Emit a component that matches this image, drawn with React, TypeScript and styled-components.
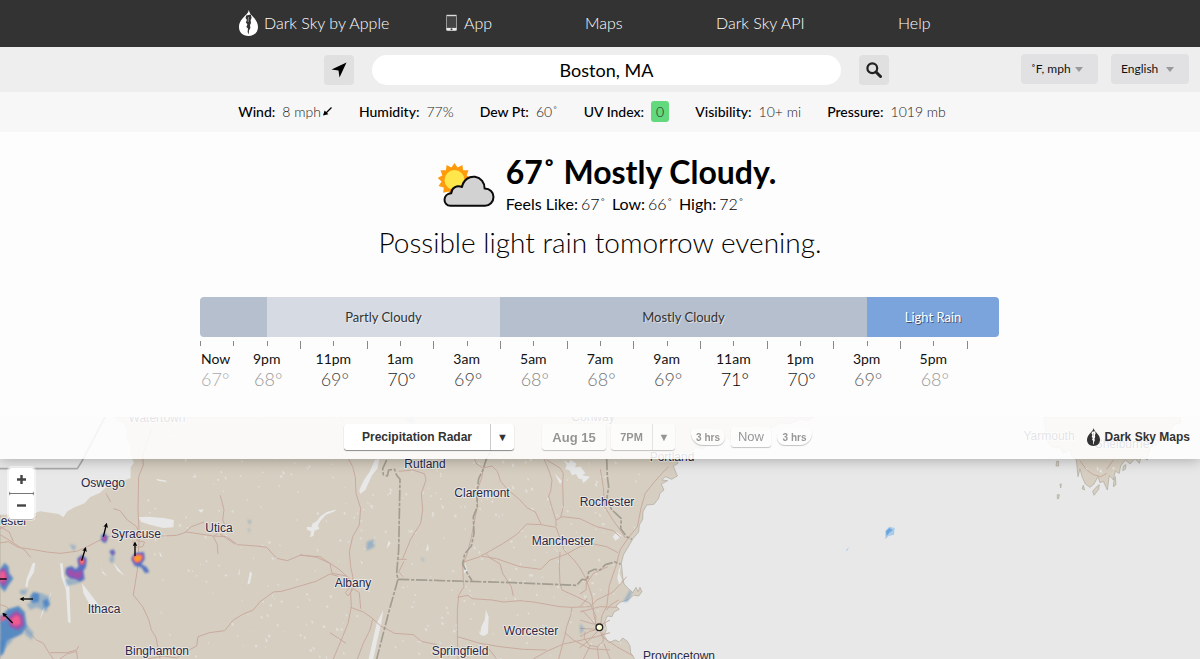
import React from "react";
import styled, { createGlobalStyle } from "styled-components";

const GlobalStyle = createGlobalStyle`
  * { box-sizing: border-box; }
  body { margin: 0; background: #fdfdfd; color: #000; font-family: Lato, sans-serif; }
  button, input, select { font-family: inherit; border: 0; margin: 0; padding: 0; }
  ul, ol, dl, dd, dt, p, h1 { margin: 0; padding: 0; list-style: none; }
`;

const Page = styled.div`
  display: flex;
  flex-direction: column;
  min-height: 100vh;
`;

const NavBar = styled.nav`
  display: grid;
  grid-template-columns: 206px 140px 131px 182px 33px;
  justify-content: center;
  align-items: center;
  height: 47px;
  padding: 0 30px 2px 0;
  background: #333;
`;

const NavLink = styled.a`
  display: flex;
  align-items: center;
  gap: 6px;
  color: #fff;
  font-size: 16px;
  font-weight: 300;
  line-height: 24px;
  text-decoration: none;
  white-space: nowrap;
`;

const SearchRow = styled.div`
  display: grid;
  grid-template-columns: 1fr auto 1fr;
  height: 45px;
  padding: 7px 11px 0 24px;
  background: #eee;
`;

const SearchForm = styled.form`
  grid-column: 2;
  display: flex;
  gap: 18px;
  padding-top: 1px;
`;

const SquareButton = styled.button`
  display: flex;
  align-items: center;
  justify-content: center;
  width: 30px;
  height: 30px;
  border-radius: 4px;
  background: #e0e0e0;
`;

const SearchInput = styled.input`
  width: 469px;
  height: 30px;
  border-radius: 15px;
  background: #fff;
  color: #000;
  font-size: 18px;
  text-align: center;
`;

const Settings = styled.div`
  display: flex;
  justify-content: flex-end;
  gap: 13px;
`;

const SelectBox = styled.label`
  position: relative;
  height: 30px;
`;

const Select = styled.select`
  appearance: none;
  width: ${(p: { $wide?: boolean }) => (p.$wide ? "78px" : "77px")};
  height: 30px;
  padding: 0 0 2px 10px;
  border-radius: 4px;
  background: #e1e1e3;
  color: #111;
  font-size: 12px;
`;

const Caret = styled.svg`
  position: absolute;
  right: 15px;
  top: 13px;
  pointer-events: none;
`;

const Stats = styled.dl`
  display: flex;
  justify-content: center;
  align-items: center;
  gap: 26px;
  height: 40px;
  padding: 0 16px 2px 0;
  background: #f7f7f7;
  font-size: 14px;
`;

const Stat = styled.div`
  display: flex;
  align-items: center;
  gap: 7px;
  white-space: nowrap;
  dt { font-weight: 500; }
  dd { display: flex; align-items: center; font-weight: 300; color: #222; }
`;

const UvBadge = styled.span`
  padding: 2px 5px;
  border-radius: 3px;
  background: #62d97c;
  line-height: 17px;
`;

const Summary = styled.section`
  display: flex;
  flex-direction: column;
  align-items: center;
  padding: 20px 0 37px;
`;

const Current = styled.div`
  display: flex;
  align-items: flex-start;
  gap: 10px;
  padding-left: 14px;
  svg { margin-top: 10px; }
`;

const Headline = styled.h1`
  font-size: 32px;
  font-weight: 700;
  line-height: 40px;
`;

const Detail = styled.dl`
  display: flex;
  gap: 6px;
  font-size: 16px;
  line-height: 24px;
  div { display: flex; gap: 3px; }
  dt { font-weight: 400; }
  dd { font-weight: 300; }
`;

const Outlook = styled.p`
  padding-top: 8px;
  font-size: 28px;
  font-weight: 300;
  line-height: 36px;
`;

const Timeline = styled.section`
  width: 100%;
  max-width: 800px;
  height: 120px;
  margin: 0 auto;
`;

const Stages = styled.div`
  display: grid;
  grid-template-columns: 67fr 233fr 367fr 132fr;
  height: 40px;
  margin-right: 1px;
  border-radius: 4px;
  overflow: hidden;
`;

const Stage = styled.div<{ $bg: string; $rain?: boolean }>`
  display: flex;
  align-items: center;
  justify-content: center;
  background: ${(p) => p.$bg};
  color: ${(p) => (p.$rain ? "#fff" : "#333")};
  text-shadow: 1px 1px 0 ${(p) => (p.$rain ? "rgba(0,0,0,.5)" : "rgba(255,255,255,.5)")};
  font-size: 13px;
`;

const Ticks = styled.div`
  display: grid;
  grid-template-columns: repeat(24, 1fr);
  height: 12px;
  padding-top: 4px;
`;

const Tick = styled.i<{ $tall: boolean }>`
  width: 1px;
  height: ${(p) => (p.$tall ? 8 : 5)}px;
  background: #888;
`;

const Hours = styled.ol`
  display: grid;
  grid-template-columns: repeat(24, 1fr);
`;

const Hour = styled.li<{ $now: boolean; $tone: string }>`
  grid-column: span ${(p) => (p.$now ? 1 : 2)};
  display: flex;
  flex-direction: column;
  align-items: ${(p) => (p.$now ? "flex-start" : "center")};
  padding-left: ${(p) => (p.$now ? 1 : 0)}px;
  color: #111;
  font-size: 14px;
  line-height: 20px;
  span {
    padding-left: ${(p) => (p.$now ? 0 : 3)}px;
    color: ${(p) => p.$tone};
    font-size: 18px;
    font-weight: 300;
  }
`;

const MapPanel = styled.section`
  position: relative;
  flex: 1;
  min-height: 242px;
  overflow: hidden;
  background: #e8e8e8;
  font-family: "Liberation Sans", Arial, sans-serif;
`;

const MapDrawing = styled.svg`
  position: absolute;
  inset: 0;
  width: 100%;
  height: 100%;
`;

const MapToolbar = styled.div`
  position: absolute;
  top: 0;
  left: 0;
  right: 0;
  display: grid;
  grid-template-columns: 1fr auto 1fr;
  align-items: center;
  height: 42px;
  padding: 0 10px 2px;
  background: rgba(255, 255, 255, 0.87);
  box-shadow: 0 2px 12px rgba(0, 0, 0, 0.25);
`;

const Controls = styled.div`
  grid-column: 2;
  display: flex;
  align-items: center;
  padding-right: 38px;
`;

const Split = styled.div<{ $faded?: boolean; $gap: number }>`
  display: flex;
  height: 26px;
  margin-right: ${(p) => p.$gap}px;
  border-radius: 3px;
  background: #fff;
  box-shadow: 0 1px 1px rgba(0, 0, 0, 0.45);
  opacity: ${(p) => (p.$faded ? 0.5 : 1)};
`;

const MapButton = styled.button<{ $w: number; $size?: number }>`
  width: ${(p) => p.$w}px;
  background: none;
  color: #333;
  font-size: ${(p) => p.$size ?? 12}px;
  font-weight: 700;
  white-space: nowrap;
  & + & { border-left: 1px solid #ccc; font-size: 11px; }
`;

const StepButton = styled.button<{ $w: number; $kind: "back" | "now" | "forward" }>`
  width: ${(p) => p.$w}px;
  height: ${(p) => (p.$kind === "now" ? 20 : 16)}px;
  padding-bottom: ${(p) => (p.$kind === "now" ? 2 : 0)}px;
  margin-right: 6px;
  border-radius: ${(p) =>
    p.$kind === "now" ? "3px" : p.$kind === "back" ? "2px 8px 8px 12px" : "8px 2px 12px 8px"};
  background: #fff;
  box-shadow: 0 1px 1px rgba(0, 0, 0, 0.45);
  color: #333;
  font-size: ${(p) => (p.$kind === "now" ? 13 : 10)}px;
  font-weight: ${(p) => (p.$kind === "now" ? 400 : 700)};
  white-space: nowrap;
  opacity: 0.5;
`;

const MapBrand = styled.a`
  display: flex;
  align-items: center;
  justify-self: end;
  gap: 5px;
  color: #333;
  font-size: 12px;
  font-weight: 700;
  text-decoration: none;
  white-space: nowrap;
`;

const ZoomControl = styled.div`
  position: absolute;
  left: 9px;
  top: 51px;
  display: flex;
  flex-direction: column;
  gap: 1px;
  border-radius: 3px;
  background: #777;
  box-shadow: 0 0 0 2px rgba(255, 255, 255, 0.5), 0 1px 0 #777;
`;

const ZoomButton = styled.button`
  width: 25px;
  height: 25px;
  border-radius: 2px;
  background: #fff;
  color: #333;
`;

function DropLogo({ fill, cut, w, h }: { fill: string; cut: string; w: number; h: number }) {
  return (
    <svg width={w} height={h} viewBox="0 0 19 26" aria-hidden="true">
      <path d="M9.8 0C10.4 2 10.8 3 11.600 4.200C12.500 5.200 13.200 5.800 14 6.800C17 10 19 13 19 17C19 22.300 15.200 26 9.500 26C3.800 26 0 22.300 0 17C0 12 3.200 9 6.200 5.600C7.800 3.900 9.200 3 9.800 0Z" fill={fill} />
      <path d="M7.200 5.400L11.800 4.600L12.600 8L11.600 10L12 13L11 15L11.400 18L10 20.500L9.700 24.600L8.600 22L9 18.600L7.400 17L8.400 14.300L6.800 12.500L7.900 10L6.600 8Z" fill={cut} />
      <path d="M9.500 7L9.200 12" stroke={fill} strokeWidth=".8" opacity=".5" />
    </svg>
  );
}

const sunPoints = Array.from({ length: 26 }, (_, i) => {
  const r = i % 2 ? 13 : 17;
  const a = (i / 26) * Math.PI * 2 - Math.PI / 2;
  return `${(16.5 + r * Math.cos(a)).toFixed(1)},${(18 + r * Math.sin(a)).toFixed(1)}`;
}).join(" ");

function WeatherIcon() {
  return (
    <svg width="58" height="46" viewBox="0 0 58 46" role="img" aria-label="Mostly cloudy">
      <polygon points={sunPoints} fill="#ff9a0c" />
      <circle cx="16.5" cy="18" r="10" fill="#ffe64a" />
      <path
        d="M12.5 43.7C4.500 43.700 4.300 31.800 13.300 31.300C13.300 26 18.500 23 24 25C25.500 17.500 31 14.200 37 14.800C43 15.800 46.800 20.500 46.600 26.600C52 26.600 55.500 30.300 55.500 35C55.500 40 51.500 43.700 47 43.700Z"
        fill="#d2d2d2" stroke="#0a0a0a" strokeWidth="2" strokeLinejoin="round"
      />
    </svg>
  );
}

const LAND =
  "M0 21H2440L2425 32L2400 27L2370 42L2340 38L2310 55L2270 62L2250 80L2220 72L2200 92L2170 80L2150 105L2130 95L2110 118L2085 112L2070 135L2045 130L2030 147L2034 160L2020 168L2032 198L2015 208L1996 200L1985 210L2003 212L1984 222L1992 240L1980 250L1976 265L1962 283L1940 285L1929 305L1928 328L1918 345L1916 366L1899 386L1885 410L1870 435L1864 460L1868 500L1872 522L1884 535L1898 548L1908 532L1914 545L1920 532L1926 545L1916 558L1900 556L1884 570L1862 576L1848 588L1858 598L1842 606L1836 620L1822 618L1814 636L1820 658L1812 676L1826 698L1846 690L1858 696L1868 684L1882 694L1890 708L1892 728L1912 760H0Z";
const NOVA =
  "M3132 21H3540L3544 38L3520 44L3512 64L3484 76L3470 104L3450 112L3442 150L3424 138L3418 160L3405 146L3390 162L3376 150L3362 168L3358 190L3346 184L3340 210L3328 196L3322 240L3310 214L3300 218L3294 200L3282 222L3270 232L3256 222L3246 200L3240 176L3234 200L3229 150L3215 138L3212 118L3190 130L3180 110L3160 115L3140 90Z";
const LAKE =
  "M0 21H345L352 32L370 42L382 62L376 82L392 108L390 130L402 158L392 172L392 205L350 218L320 230L300 248L270 262L254 280L224 292L202 304L190 322L176 312L150 308L120 304L98 312L0 314Z";

const ROADS = [
  "M458 52L440 95L428 140L430 165L416 200L414 300L418 380L412 480L400 555L428 590L446 628L454 660L468 682L480 747",
  "M-10 400L25 395L55 412L95 418L140 426L180 430L230 424L262 410L300 390L330 378L420 374L490 378L530 376L560 366L600 372L640 378L680 380L712 404L770 408L800 412L830 445L862 452L900 436L960 440L990 460L996 490L1040 498L1060 520",
  "M340 296L360 302L382 330L410 350L418 370L410 392L434 396L428 410L405 412L398 392",
  "M318 250L332 276M556 366L574 350L612 336M661 256L672 300L668 330L676 348L655 368L640 380L652 404L654 432",
  "M660 372L690 392L704 402",
  "M0 374L30 392L54 408L74 420L92 442M0 350L28 366L40 395M110 320L90 330L28 342L0 356",
  "M440 747L490 738L530 744L552 728L590 708L594 680L628 668L674 662L700 630L730 612L760 600L780 575L820 546L845 544L900 528L948 514L990 492",
  "M0 640L20 650L60 644L90 670L110 690L130 700L148 730L160 747M150 728L200 728L230 720L236 708M180 747L200 732L230 724L232 747M0 584L20 590L28 600",
  "M1046 147L1058 170L1066 202L1068 250L1082 295L1078 345L1058 380L1048 425L1052 470L1058 498L1060 520L1052 548L1054 590L1044 640L1028 680L1000 747",
  "M900 434L950 442L990 460L1020 480L1054 512M990 492L1012 498L1030 522M1060 520L1036 548L1044 558L1060 536L1078 548L1082 596",
  "M1052 592L1090 606L1116 624L1142 648L1184 670L1240 674L1264 694L1310 704L1346 740M1118 628L1110 660L1090 700L1072 747M990 668L1038 700",
  "M1212 454L1196 486L1210 500M1195 448H1220M1196 184L1240 180L1274 192L1278 210L1264 250L1268 300L1262 340L1232 388L1208 446",
  "M1424 147L1428 160L1450 175L1446 200L1434 236L1432 290L1422 340L1414 382L1402 430L1388 466L1390 510L1392 530L1376 556L1372 602L1372 680L1374 747",
  "M1450 174L1476 168L1492 184L1502 214L1524 240L1558 268L1582 294L1606 306L1624 344L1668 352L1680 384L1692 420L1722 450L1740 474L1758 506L1776 560L1782 616L1790 650",
  "M1632 147L1646 180L1656 210L1652 244L1646 258L1658 300L1668 330L1668 350",
  "M1668 330L1688 320L1740 326L1790 350L1840 362L1862 382M1640 150L1680 174L1690 190L1688 220L1690 290L1682 322",
  "M1624 344L1580 342L1552 372L1510 400L1458 430L1442 438L1490 446L1530 460L1560 470L1622 478L1650 450L1700 432L1740 410L1780 402L1820 410L1854 428",
  "M1458 430L1470 444L1500 462L1508 490L1534 530L1540 558M1392 456L1440 440",
  "M1372 562L1404 556L1416 566L1476 570L1510 576L1560 572L1600 576L1680 590L1716 592L1770 590L1790 570L1836 548L1858 526L1880 500",
  "M1716 592L1712 616L1700 650L1694 680L1676 747M1600 747L1640 724L1690 702L1720 696L1790 680L1830 668M1694 668L1720 690L1770 716L1830 720",
  "M1372 680L1440 700L1500 710L1570 718L1640 720M1466 716L1490 747",
  "M2006 170L1986 190L1958 222L1936 250L1924 290L1912 350L1886 382L1860 420L1848 468L1828 526L1820 590L1806 616L1800 655",
  "M1801 178L1810 232L1814 290L1840 332L1862 362L1876 384",
  "M1740 630L1772 640L1800 646L1830 630M1740 655L1790 658M1740 680L1770 664L1800 656M1746 600L1770 626L1792 650M1760 500L1758 540L1740 552M1762 566L1740 590M1800 656L1764 694L1738 714M1800 656L1806 680L1850 710L1900 738M1756 665L1752 684L1768 706L1792 710L1810 694L1808 668M1740 606L1800 590L1850 592",
  "M1770 708L1750 747M1792 710L1796 747M1812 700L1830 747M1680 426L1678 470L1680 520L1686 540L1730 560L1770 580L1788 620L1786 646M1856 570L1830 586L1820 600M1824 470L1780 490L1760 520",
  "M3240 152L3260 180L3280 194L3302 200L3320 190M3320 178L3340 150",
];

const BORDERS = [
  "M315 21L245 155L232 176H0",
  "M1160 150L1148 176L1150 194L1162 198L1166 180L1184 178L1190 196L1200 208L1196 420L1190 490L1194 508L1168 600L1130 747",
  "M1194 508L1400 514L1540 518L1730 526L1746 508L1762 510L1766 486L1784 478L1800 480L1816 464L1844 456L1862 462",
  "M1500 40L1480 110L1458 150L1448 182L1436 206L1430 250L1432 290L1420 320L1422 370L1414 408L1394 432L1388 462L1402 490L1416 512",
  "M1820 147L1822 200L1826 230L1820 270L1836 300L1864 326L1862 356L1880 380L1896 388",
];

const WATERS = [
  "M415 322L445 320L490 324L522 330L520 352L490 354L450 344L424 336Z",
  "M180 460L188 460L192 500L208 530L212 640L204 636L198 540L184 500Z",
  "M246 520L262 540L292 580L304 610L290 596L266 578L250 550Z",
  "M98 460L106 458L102 486L86 512L82 532L76 530L80 506Z",
  "M302 450L306 480L322 500L308 490ZM338 455L374 498L352 482ZM364 454L382 474ZM154 545L146 580L130 606L118 632L128 600ZM478 422L486 440L480 438Z",
  "M750 484L756 490L750 520L742 524ZM468 206L500 212L498 216L474 212ZM594 300L612 298L604 308ZM720 474L714 494L718 494Z",
  "M1138 147L1132 176L1116 196L1096 240L1080 252L1078 240L1092 210L1110 184L1124 150Z",
  "M920 350L934 352L938 340L950 334L960 320L980 306L1012 298L1000 306L978 314L962 332L954 346L958 356L944 362L940 378L930 382L934 364L922 360Z",
  "M1458 600L1466 620L1464 670L1452 678L1440 674L1444 650L1454 630ZM1150 600L1130 640L1106 747H1120L1132 690L1144 640Z",
  "M1690 150L1706 160L1712 150L1728 160L1726 172L1742 170L1756 190L1746 196L1752 208L1736 206L1728 192L1716 196L1708 180L1696 178L1700 164ZM1664 190L1686 214L1680 222ZM1740 194L1770 200L1750 220ZM1838 380L1850 366L1866 378L1846 392ZM1396 460L1402 482L1390 492Z",
  "M1284 400L1286 420L1278 424ZM1166 392L1172 400L1160 416ZM120 30L170 36L150 48Z",
  "M1864 462L1858 490L1866 510L1858 525L1852 505L1856 480ZM1816 650L1830 642L1842 660L1830 672L1838 690L1822 684Z",
];

// Small ponds scattered over the land, from a fixed seed.
const PONDS = (() => {
  let seed = 71;
  const next = () => (seed = (seed * 16807) % 2147483647) / 2147483647;
  return Array.from({ length: 380 }, () => {
    const x = Math.round(440 + next() * 1480);
    const y = Math.round(21 + next() * 726);
    const a = Math.round(2 + next() * 4);
    const b = Math.round(next() * 10 - 5);
    return `M${x} ${y}l${a} ${b}l3 ${a}l-${a} 3z`;
  }).join("");
})();

type Blob = { d: string; fill: string };
const RAIN: Blob[] = [
  { d: "M0 478L14 458L26 470L28 490L40 505L24 528L14 545L0 530ZM90 560L100 546L118 550L116 576L94 580ZM128 572L144 566L150 585L134 596ZM0 620L24 598L56 588L74 606L80 650L66 672L36 686L20 694L10 730L0 738Z", fill: "#4c83c3" },
  { d: "M232 446L246 434L260 446L258 470L250 484L254 508L240 516L228 508L210 506L196 492L198 474L214 468L228 478L236 468ZM304 376L316 370L324 384L316 400L304 392ZM328 424L340 418L346 428L338 440ZM394 446L404 430L432 426L434 448L424 462L440 472L448 486L436 490L424 472L404 468Z", fill: "#4568c4" },
  { d: "M0 480L14 474L26 500L14 530L0 520ZM24 620L48 602L68 616L72 646L54 660L30 650ZM236 450L246 440L256 452L250 466L240 466ZM200 482L214 476L226 488L244 478L248 500L232 508L204 496ZM308 380L318 378L318 392L310 392ZM398 444L408 434L428 432L426 450L414 460L400 456ZM332 426L340 424L340 434Z", fill: "#a84ba9" },
  { d: "M0 488L12 482L18 502L8 518L0 510ZM34 626L48 614L60 622L62 642L48 648L34 642ZM0 622L14 614L20 626L4 636ZM238 452L248 444L254 456L244 466ZM398 444L408 434L428 434L426 450L410 460ZM309 382L317 382L314 392Z", fill: "#fa5c8b" },
  { d: "M400 442L412 436L426 438L422 452L406 456ZM241 454L249 450L247 462Z", fill: "#ffa51f" },
];

const WIND = [
  [310, 380, 319, 344], [245, 452, 256, 416], [405, 438, 405, 400],
  [99, 567, 64, 567], [38, 639, 11, 612], [20, 507, -10, 507],
];

const PLACES: [string, number, number][] = [
  ["Watertown", 157, 5], ["Oswego", 103, 70], ["Rochester", 0, 108], ["Syracuse", 136, 121],
  ["Utica", 219, 115], ["Ithaca", 104, 196], ["Binghamton", 157, 238], ["Rutland", 425, 51],
  ["Claremont", 482, 80], ["Rochester", 607, 89], ["Manchester", 563, 128], ["Albany", 353, 170],
  ["Worcester", 531, 218], ["Springfield", 460, 238], ["Conway", 593, 4], ["Portland", 672, 44],
  ["Provincetown", 679, 243], ["Yarmouth", 1049, 23], ["Shelburne", 1122, 31],
];

function RadarMap() {
  return (
    <MapDrawing viewBox="0 0 1200 242" preserveAspectRatio="xMidYMid slice" role="img" aria-label="Precipitation radar map">
      <defs>
        <filter id="soft" x="-20%" y="-20%" width="140%" height="140%"><feGaussianBlur stdDeviation="3" /></filter>
        <clipPath id="land"><path d={LAND} /></clipPath>
        <marker id="tip" viewBox="0 0 10 10" refX="6" refY="5" markerWidth="14" markerHeight="14" markerUnits="userSpaceOnUse" orient="auto">
          <path d="M0 0L10 5L0 10L2 5Z" />
        </marker>
      </defs>
      <g transform="translate(0 -7) scale(.333333)" strokeLinejoin="round">
        <path d={LAND + NOVA} fill="#d6cec0" stroke="#aaa79b" strokeWidth="2" />
        <path d="M3170 154h6v14h-8zM3180 222h4l-2 12zM3172 254h6l-2 12h-4zM3288 232l10-8-2 14-14 18-4-12zM3250 226l4 14-8-4zM3370 168l8-4-2 14-8 4zM3342 210l4-10 2 24-8 6z" fill="#d6cec0" stroke="#aaa79b" strokeWidth="2" />
        <path d={LAKE} fill="#e8e8e8" />
        <g clipPath="url(#land)" fill="#e8e8e8">
          <path d={PONDS} opacity=".65" />
          {WATERS.map((d) => <path key={d} d={d} />)}
        </g>
        <path d="M3255 172l8 4-4 8zM3290 168l6 10-4 6zM3302 176l6 12-10-2zM3336 174l8-4-2 10z" fill="#e8e8e8" />
        {ROADS.map((d) => <path key={d} d={d} fill="none" stroke="#c9aa9f" strokeWidth="3" />)}
        {BORDERS.map((d, i) => (
          <path key={d} d={d} fill="none" stroke={i ? "#a29d91" : "#aaa"} strokeWidth="5" strokeDasharray={i ? "34 5 10 5" : undefined} />
        ))}
        <g filter="url(#soft)" fill="#5f94c8" opacity=".5">
          <path d="M60 540L84 538L76 556L60 552ZM80 580L90 600L110 592L140 606L150 560L120 548L96 580ZM76 640L100 668L96 690L74 672ZM0 690L40 690L20 710L0 745ZM196 506L240 510L236 520L200 528ZM328 440L344 440L340 460L330 456ZM208 402L228 408L222 424ZM742 330L754 332L750 344ZM744 358L750 356L748 370ZM1100 396L1120 388L1124 410L1100 422ZM1262 442L1272 448L1270 456ZM1216 30L1240 24L1238 40ZM1740 640L1752 655L1742 676ZM1870 576L1890 540L1896 548L1882 576Z" />
        </g>
        {RAIN.map((b) => <path key={b.fill} d={b.d} fill={b.fill} filter="url(#soft)" opacity=".9" />)}
        <path d="M2656 362L2668 350L2684 354L2682 374L2666 378L2656 388ZM2536 424L2546 412L2544 420Z" fill="#a9cbea" />
        <path d="M2658 364L2668 354L2678 360L2668 368L2660 378Z" fill="#6ba6df" />
        {WIND.map(([x1, y1, x2, y2]) => (
          <line key={x1} x1={x1} y1={y1} x2={x2} y2={y2} stroke="#000" strokeWidth="4" markerEnd="url(#tip)" />
        ))}
        <circle cx="1798" cy="652" r="10" fill="#ffffd8" stroke="#222" strokeWidth="4" />
      </g>
      <g fontSize="12" textAnchor="middle" fill="#28284a" stroke="#f2efea" strokeWidth="2" strokeOpacity=".8" paintOrder="stroke" strokeLinejoin="round">
        {PLACES.map(([name, x, y]) => <text key={name + x} x={x} y={y}>{name}</text>)}
      </g>
    </MapDrawing>
  );
}

const HOURS: [string, string, string][] = [
  ["Now", "67°", "#aaa"], ["9pm", "68°", "#999"], ["11pm", "69°", "#444"], ["1am", "70°", "#222"],
  ["3am", "69°", "#444"], ["5am", "68°", "#888"], ["7am", "68°", "#777"], ["9am", "69°", "#555"],
  ["11am", "71°", "#000"], ["1pm", "70°", "#222"], ["3pm", "69°", "#666"], ["5pm", "68°", "#999"],
];

function SelectCaret() {
  return <Caret width="8" height="5" viewBox="0 0 8 5" aria-hidden="true"><path d="M0 0H8L4 5Z" fill="#999" /></Caret>;
}

export default function App() {
  return (
    <Page>
      <GlobalStyle />
      <NavBar>
        <NavLink href="#"><DropLogo fill="#fff" cut="#333" w={19} h={26} />Dark Sky by Apple</NavLink>
        <NavLink href="#app">
          <svg width="13" height="18" viewBox="0 0 13 18" aria-hidden="true">
            <rect x="1.500" y="1.500" width="10" height="15" rx="1" fill="#444" stroke="#999" />
            <path d="M1.500 1.500H11.500" stroke="#ddd" strokeWidth="1.400" />
            <path d="M1.500 15.200H11.500" stroke="#eee" strokeWidth="2.600" />
            <circle cx="6.500" cy="15.300" r="1" fill="#444" />
          </svg>
          App
        </NavLink>
        <NavLink href="#maps">Maps</NavLink>
        <NavLink href="#api">Dark Sky API</NavLink>
        <NavLink href="#help">Help</NavLink>
      </NavBar>

      <SearchRow>
        <SearchForm onSubmit={(e) => e.preventDefault()}>
          <SquareButton type="button" aria-label="Use my location">
            <svg width="16" height="16" viewBox="0 0 16 16" aria-hidden="true"><path d="M15.500 .5L8.500 15.500L7.500 8.500L.5 7.500Z" /></svg>
          </SquareButton>
          <SearchInput aria-label="Location" defaultValue="Boston, MA" />
          <SquareButton type="submit" aria-label="Search">
            <svg width="16" height="16" viewBox="0 0 16 16" aria-hidden="true">
              <circle cx="6.300" cy="6.300" r="4.900" fill="none" stroke="#222" strokeWidth="2.200" />
              <path d="M10 10L14.500 14.500" stroke="#222" strokeWidth="3" strokeLinecap="round" />
            </svg>
          </SquareButton>
        </SearchForm>
        <Settings>
          <SelectBox><Select aria-label="Units"><option>˚F, mph</option></Select><SelectCaret /></SelectBox>
          <SelectBox><Select $wide aria-label="Language"><option>English</option></Select><SelectCaret /></SelectBox>
        </Settings>
      </SearchRow>

      <Stats>
        <Stat>
          <dt>Wind:</dt>
          <dd>8 mph
            <svg width="12" height="12" viewBox="0 0 12 12" aria-label="from the northeast"><path d="M10.500 2.500L5 8" stroke="#000" strokeWidth="1.300" /><path d="M2 10.500L3.600 5.500L7.400 9.200Z" /></svg>
          </dd>
        </Stat>
        <Stat><dt>Humidity:</dt><dd>77%</dd></Stat>
        <Stat><dt>Dew Pt:</dt><dd>60˚</dd></Stat>
        <Stat><dt>UV Index:</dt><dd><UvBadge>0</UvBadge></dd></Stat>
        <Stat><dt>Visibility:</dt><dd>10+ mi</dd></Stat>
        <Stat><dt>Pressure:</dt><dd>1019 mb</dd></Stat>
      </Stats>

      <Summary>
        <Current>
          <WeatherIcon />
          <div>
            <Headline>67˚ Mostly Cloudy.</Headline>
            <Detail>
              <div><dt>Feels Like:</dt><dd>67˚</dd></div>
              <div><dt>Low:</dt><dd>66˚</dd></div>
              <div><dt>High:</dt><dd>72˚</dd></div>
            </Detail>
          </div>
        </Current>
        <Outlook>Possible light rain tomorrow evening.</Outlook>
      </Summary>

      <Timeline>
        <Stages>
          <Stage $bg="#b6bfce" />
          <Stage $bg="#d5dae3">Partly Cloudy</Stage>
          <Stage $bg="#b6bfce">Mostly Cloudy</Stage>
          <Stage $bg="#7ba3dc" $rain>Light Rain</Stage>
        </Stages>
        <Ticks>{Array.from({ length: 24 }, (_, i) => <Tick key={i} $tall={i > 1 && i % 2 === 1} />)}</Ticks>
        <Hours>
          {HOURS.map(([time, temp, tone], i) => (
            <Hour key={time} $now={i === 0} $tone={tone}>{time}<span>{temp}</span></Hour>
          ))}
        </Hours>
      </Timeline>

      <MapPanel>
        <RadarMap />
        <MapToolbar>
          <Controls>
            <Split $gap={28}>
              <MapButton $w={146}>Precipitation Radar</MapButton>
              <MapButton $w={24} aria-label="Choose layer">▼</MapButton>
            </Split>
            <Split $faded $gap={5}><MapButton $w={64} $size={13}>Aug 15</MapButton></Split>
            <Split $faded $gap={16}>
              <MapButton $w={41} $size={11}>7PM</MapButton>
              <MapButton $w={23} aria-label="Choose hour">▼</MapButton>
            </Split>
            <StepButton $kind="back" $w={34}>3 hrs</StepButton>
            <StepButton $kind="now" $w={40}>Now</StepButton>
            <StepButton $kind="forward" $w={35}>3 hrs</StepButton>
          </Controls>
          <MapBrand href="#maps"><DropLogo fill="#333" cut="#fff" w={13} h={18} />Dark Sky Maps</MapBrand>
        </MapToolbar>
        <ZoomControl>
          <ZoomButton aria-label="Zoom in"><svg width="11" height="11" viewBox="0 0 11 11"><path d="M1 5.500H10M5.500 1V10" stroke="#444" strokeWidth="2.400" /></svg></ZoomButton>
          <ZoomButton aria-label="Zoom out"><svg width="11" height="11" viewBox="0 0 11 11"><path d="M1 5.500H10" stroke="#444" strokeWidth="2.400" /></svg></ZoomButton>
        </ZoomControl>
      </MapPanel>
    </Page>
  );
}
